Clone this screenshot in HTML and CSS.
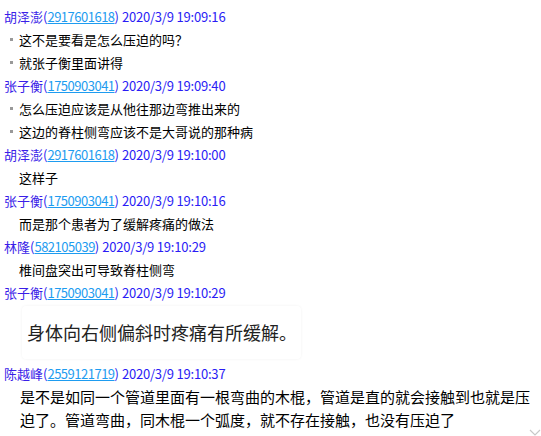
FILE: index.html
```html
<!DOCTYPE html>
<html lang="zh-CN">
<head>
    <meta charset="UTF-8">
    <title>聊天记录</title>
    <link rel="stylesheet" href="styles.css">
</head>
<body>
    <div class="chat-log">
        <div class="msg">
            <div class="msg-head"><span class="name">胡泽澎</span>(<a class="qq" href="#">2917601618</a>) <span class="time">2020/3/9 19:09:16</span></div>
            <div class="line bullet">这不是要看是怎么压迫的吗？</div>
            <div class="line bullet">就张子衡里面讲得</div>
        </div>
        <div class="msg">
            <div class="msg-head"><span class="name">张子衡</span>(<a class="qq" href="#">1750903041</a>) <span class="time">2020/3/9 19:09:40</span></div>
            <div class="line bullet">怎么压迫应该是从他往那边弯推出来的</div>
            <div class="line bullet">这边的脊柱侧弯应该不是大哥说的那种病</div>
        </div>
        <div class="msg">
            <div class="msg-head"><span class="name">胡泽澎</span>(<a class="qq" href="#">2917601618</a>) <span class="time">2020/3/9 19:10:00</span></div>
            <div class="line">这样子</div>
        </div>
        <div class="msg">
            <div class="msg-head"><span class="name">张子衡</span>(<a class="qq" href="#">1750903041</a>) <span class="time">2020/3/9 19:10:16</span></div>
            <div class="line">而是那个患者为了缓解疼痛的做法</div>
        </div>
        <div class="msg">
            <div class="msg-head"><span class="name">林隆</span>(<a class="qq" href="#">582105039</a>) <span class="time">2020/3/9 19:10:29</span></div>
            <div class="line">椎间盘突出可导致脊柱侧弯</div>
        </div>
        <div class="msg">
            <div class="msg-head"><span class="name">张子衡</span>(<a class="qq" href="#">1750903041</a>) <span class="time">2020/3/9 19:10:29</span></div>
            <div class="quote-box">身体向右侧偏斜时疼痛有所缓解。</div>
        </div>
        <div class="msg">
            <div class="msg-head"><span class="name">陈越峰</span>(<a class="qq" href="#">2559121719</a>) <span class="time">2020/3/9 19:10:37</span></div>
            <div class="line large">是不是如同一个管道里面有一根弯曲的木棍，管道是直的就会接触到也就是压迫了。管道弯曲，同木棍一个弧度，就不存在接触，也没有压迫了</div>
        </div>
    </div>

    <svg class="scroll-hint" viewBox="0 0 12 8" xmlns="http://www.w3.org/2000/svg">
        <path d="M1 1 L6 6 L11 1" fill="none" stroke="#c8c8c8" stroke-width="1.2"/>
    </svg>
</body>
</html>
```

FILE: styles.css
```css
* {
    margin: 0;
    padding: 0;
    box-sizing: border-box;
}

body {
    font-family: "Noto Sans CJK SC", "Microsoft YaHei", sans-serif;
    color: #000;
    background-color: #fff;
    padding: 5px 0 0 4px;
    overflow: hidden;
}

.chat-log {
    width: 530px;
}

.msg-head {
    font-size: 13px;
    line-height: 23px;
    color: #2a1cf0;
    white-space: nowrap;
}

.msg-head .name {
    color: #3a1ee8;
}

.msg-head .qq {
    color: #1e9cf0;
    text-decoration: underline;
    letter-spacing: -0.5px;
}

.msg-head .time {
    color: #2a1cf5;
    letter-spacing: -0.2px;
}

.line {
    font-size: 13px;
    line-height: 23px;
    padding-left: 15px;
    position: relative;
}

.line.bullet::before {
    content: "";
    position: absolute;
    left: 6px;
    top: 10px;
    width: 3px;
    height: 3px;
    background-color: #999;
}

.line.large {
    font-size: 15px;
    padding-left: 16px;
}

.quote-box {
    display: inline-block;
    margin: 2px 0 3px 18px;
    padding: 0 4px 0 5px;
    height: 53px;
    line-height: 53px;
    font-size: 18px;
    color: #222;
    background-color: #fff;
    border-radius: 4px;
    box-shadow: 0 0 3px rgba(0, 0, 0, 0.06);
}

.scroll-hint {
    position: absolute;
    left: 529px;
    top: 429px;
    width: 12px;
    height: 8px;
}
```
